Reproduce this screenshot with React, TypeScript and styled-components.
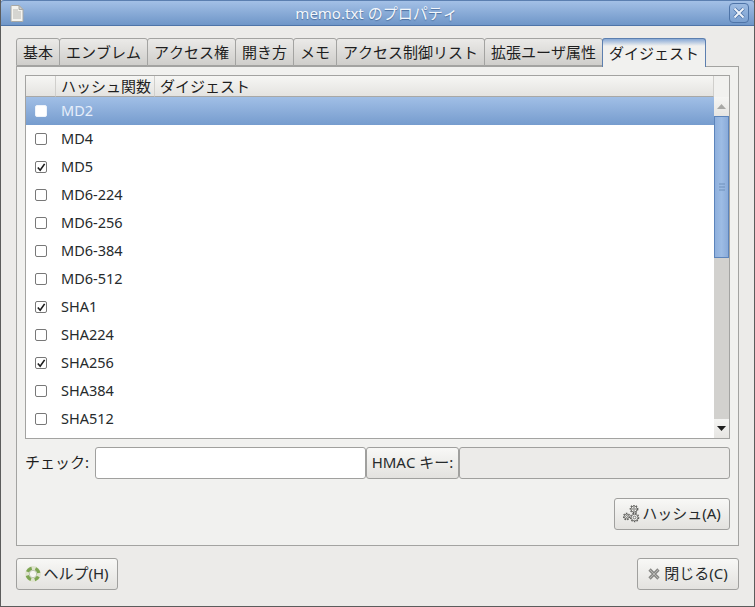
import styled, { createGlobalStyle } from "styled-components";

const Global = createGlobalStyle`
  html, body {
    margin: 0;
    padding: 0;
    background: #ecebe9;
  }
  * {
    box-sizing: border-box;
  }
`;

const Window = styled.div`
  display: flex;
  flex-direction: column;
  width: 755px;
  height: 607px;
  overflow: hidden;
  background: #ecebe9;
  border: 1px solid #5c5c5c;
  border-top: none;
  color: #2e3436;
  font-family: "Noto Sans", "Noto Sans CJK JP", sans-serif;
  font-size: 15px;
  font-kerning: none;
  line-height: 20px;
`;

const TitleBar = styled.div`
  display: flex;
  align-items: center;
  flex-shrink: 0;
  height: 26px;
  margin: 0 -1px;
  padding: 0 5px 0 9px;
  background: linear-gradient(#a3c0e6, #6f96c8);
  border: 1px solid #4e74a8;
  border-top-color: #5b7fb0;
  border-radius: 4px 4px 0 0;
`;

const TitleText = styled.div`
  flex: 1;
  text-align: center;
  color: #f4f7fb;
  text-shadow: 0 1px 1px #4a6f9f;
`;

const CloseBox = styled.div`
  display: flex;
  align-items: center;
  justify-content: center;
  width: 20px;
  height: 20px;
  border: 1px solid #4e74a8;
  border-radius: 4px;
  background: linear-gradient(#9dbbe2, #7ba0d0);
`;

const Body = styled.div`
  flex: 1;
  display: flex;
  flex-direction: column;
  padding: 12px 15px 16px;
  min-height: 0;
`;

const TabStrip = styled.div`
  display: flex;
  flex-shrink: 0;
  height: 29px;
  margin-bottom: -1px;
`;

const Tab = styled.div<{ $active?: boolean }>`
  display: flex;
  align-items: center;
  justify-content: center;
  flex-shrink: 0;
  height: ${({ $active }) => ($active ? "29px" : "28px")};
  padding: 0 6px;
  margin-right: -1px;
  color: #1e1e1e;
  white-space: nowrap;
  border: 1px solid ${({ $active }) => ($active ? "#5c7faf" : "#a3a3a1")};
  border-bottom: ${({ $active }) => ($active ? "none" : "1px solid #a3a3a1")};
  border-radius: 3px 3px 0 0;
  background: ${({ $active }) =>
    $active
      ? "linear-gradient(#88a9d6 0, #f1f1ef 7px, #f1f1ef 100%)"
      : "linear-gradient(#ebeae8, #cfcecb)"};
  position: relative;
  z-index: ${({ $active }) => ($active ? 1 : 0)};
`;

const Panel = styled.div`
  flex: 1;
  display: flex;
  flex-direction: column;
  min-height: 0;
  padding: 8px;
  background: #f1f1ef;
  border: 1px solid #a3a3a1;
`;

const Tree = styled.div`
  display: flex;
  flex-direction: column;
  height: 364px;
  flex-shrink: 0;
  background: #fff;
  border: 1px solid #a3a3a1;
`;

const HeaderRow = styled.div`
  display: flex;
  flex-shrink: 0;
  height: 21px;
  background: #f1f1ef;
`;

const HeaderCell = styled.div<{ $width?: number }>`
  display: flex;
  align-items: center;
  flex: ${({ $width }) => ($width ? `0 0 ${$width}px` : "1")};
  padding-left: 5px;
  color: #1e1e1e;
  background: linear-gradient(#f6f6f4, #e4e3e0);
  border-right: 1px solid #d0cfcc;
  border-bottom: 1px solid #a8a8a6;
`;

const HeaderSpacer = styled.div`
  flex: 0 0 15px;
`;

const TreeBody = styled.div`
  flex: 1;
  display: flex;
  min-height: 0;
`;

const Rows = styled.div`
  flex: 1;
  display: flex;
  flex-direction: column;
`;

const Row = styled.div<{ $selected?: boolean }>`
  display: flex;
  align-items: center;
  flex-shrink: 0;
  height: 28px;
  padding-left: 9px;
  font-size: 14.5px;
  color: ${({ $selected }) => ($selected ? "#e6eefa" : "#262a2c")};
  background: ${({ $selected }) =>
    $selected ? "linear-gradient(#a1bfe6, #769cce)" : "#fff"};
`;

const RowName = styled.span`
  margin-bottom: 2px;
`;

const Check = styled.div<{ $selected?: boolean }>`
  display: flex;
  align-items: center;
  justify-content: center;
  width: 12px;
  height: 12px;
  margin-right: 14px;
  background: #fff;
  border: 1px solid ${({ $selected }) => ($selected ? "#eef3fa" : "#787878")};
  border-radius: 2px;
`;

const Scrollbar = styled.div`
  flex: 0 0 15px;
  display: flex;
  flex-direction: column;
  background: #d2d1ce;
`;

const ScrollButton = styled.div<{ $height: number }>`
  display: flex;
  align-items: center;
  justify-content: center;
  flex: 0 0 ${({ $height }) => $height}px;
  background: linear-gradient(#f5f5f3, #e6e5e2);
`;

const Thumb = styled.div`
  display: flex;
  align-items: center;
  justify-content: center;
  flex: 0 0 142px;
  background: linear-gradient(90deg, #8fb0dd, #9dbce4 50%, #8aabd9);
  border: 1px solid #5c84bb;
`;

const Trough = styled.div`
  flex: 1;
`;

const EntryRow = styled.div`
  display: flex;
  align-items: center;
  flex-shrink: 0;
  height: 32px;
  margin-top: 8px;
`;

const EntryLabel = styled.div`
  flex: 0 0 70px;
  padding-bottom: 2px;
  color: #1e1e1e;
`;

const Entry = styled.div<{ $disabled?: boolean; $width?: number }>`
  height: 32px;
  flex: ${({ $width }) => ($width ? `0 0 ${$width}px` : "1")};
  background: ${({ $disabled }) => ($disabled ? "#ecebe9" : "#fff")};
  border: 1px solid #a0a09e;
  border-radius: 3px;
`;

const Button = styled.div`
  display: inline-flex;
  align-items: center;
  justify-content: center;
  height: 32px;
  padding-bottom: 2px;
  gap: 1px;
  color: #262a2c;
  white-space: nowrap;
  background: linear-gradient(#f8f8f6, #e3e2df);
  border: 1px solid #a0a09e;
  border-radius: 3px;
`;

const ButtonIcon = styled.span`
  display: flex;
  margin-bottom: -2px;
`;

const HmacButton = styled(Button)`
  flex: 0 0 93px;
`;

const ActionRow = styled.div`
  display: flex;
  justify-content: flex-end;
  margin-top: 19px;
`;

const HashButton = styled(Button)`
  width: 116px;
  gap: 2px;
`;

const DialogButtons = styled.div`
  display: flex;
  justify-content: space-between;
  flex-shrink: 0;
  margin-top: 12px;
`;

const HelpButton = styled(Button)`
  width: 102px;
  gap: 2px;
`;

const CloseButton = styled(Button)`
  width: 102px;
  gap: 4px;
`;

const DocIcon = () => (
  <svg width="14" height="17" viewBox="0 0 14 17">
    <path d="M1.5.5h7.5l4 4v11.5a.5.5 0 0 1-.5.5h-11a.5.5 0 0 1-.5-.5v-15a.5.5 0 0 1 .5-.5z" fill="#f4f3ef" stroke="#a8a8a4" />
    <path d="M9 .5v4h4z" fill="#d5d4cf" stroke="#a8a8a4" />
    <path d="M3 5h5M3 7h8M3 9h8M3 11h8M3 13h8" stroke="#b6b6b2" />
  </svg>
);

const CloseGlyph = () => (
  <svg width="14" height="14" viewBox="0 0 14 14">
    <path d="M2.5 2.5l9 9M11.5 2.5l-9 9" stroke="#4e74a8" strokeWidth="3.6" />
    <path d="M2.5 2.5l9 9M11.5 2.5l-9 9" stroke="#eef3fa" strokeWidth="2" />
  </svg>
);

const CheckMark = () => (
  <svg width="11" height="11" viewBox="0 0 11 11">
    <path d="M2 5.5l2.6 3L9.5 1.5" fill="none" stroke="#1c1c1c" strokeWidth="1.8" />
  </svg>
);

const Arrow = ({ up, color }: { up?: boolean; color: string }) => (
  <svg width="9" height="5" viewBox="0 0 9 5">
    <path d={up ? "M4.5 0L9 5H0z" : "M0 0h9L4.5 5z"} fill={color} />
  </svg>
);

const Grip = () => (
  <svg width="6" height="8" viewBox="0 0 6 8">
    <path d="M0 1h6M0 4h6M0 7h6" stroke="#6f8fb9" strokeWidth="1.2" />
  </svg>
);

// life ring: pale band with green blocks on the diagonals
const HelpIcon = () => (
  <svg width="16" height="16" viewBox="0 0 16 16">
    <circle cx="8" cy="8" r="5.8" fill="none" stroke="#dfe3cf" strokeWidth="4.2" />
    <circle
      cx="8"
      cy="8"
      r="5.8"
      fill="none"
      stroke="#7da552"
      strokeWidth="3.4"
      strokeDasharray="5.6 3.5"
      strokeDashoffset="2.8"
      transform="rotate(45 8 8)"
    />
    <circle cx="8" cy="8" r="3.7" fill="#f6f6f3" stroke="#a9b49b" strokeWidth=".7" />
  </svg>
);

const Gear = ({ x, y, r }: { x: number; y: number; r: number }) => (
  <g>
    <circle cx={x} cy={y} r={r + 0.7} fill="none" stroke="#5e5e5b" strokeWidth="1.4" strokeDasharray="1.5 1.2" />
    <circle cx={x} cy={y} r={r} fill="#f2f2f0" stroke="#5e5e5b" strokeWidth=".8" />
    <circle cx={x} cy={y} r={r * 0.42} fill="#f8f8f6" stroke="#5e5e5b" strokeWidth=".8" />
  </g>
);

const GearsIcon = () => (
  <svg width="17" height="18" viewBox="0 0 17 18">
    <Gear x={11} y={4} r={3} />
    <Gear x={3.6} y={11.5} r={2.4} />
    <Gear x={11.6} y={12.5} r={3.3} />
  </svg>
);

const CrossIcon = () => (
  <svg width="12" height="12" viewBox="0 0 12 12">
    <path d="M1.5 1.5l9 9M10.5 1.5l-9 9" stroke="#8a8a87" strokeWidth="3.2" />
    <path d="M2 2l8 8M10 2l-8 8" stroke="#b5b5b2" strokeWidth="1" />
  </svg>
);

const tabs = ["基本", "エンブレム", "アクセス権", "開き方", "メモ", "アクセス制御リスト", "拡張ユーザ属性", "ダイジェスト"];

const hashes = [
  { name: "MD2", checked: false },
  { name: "MD4", checked: false },
  { name: "MD5", checked: true },
  { name: "MD6-224", checked: false },
  { name: "MD6-256", checked: false },
  { name: "MD6-384", checked: false },
  { name: "MD6-512", checked: false },
  { name: "SHA1", checked: true },
  { name: "SHA224", checked: false },
  { name: "SHA256", checked: true },
  { name: "SHA384", checked: false },
  { name: "SHA512", checked: false },
];

export default function App() {
  return (
    <>
      <Global />
      <Window>
        <TitleBar>
          <DocIcon />
          <TitleText>memo.txt のプロパティ</TitleText>
          <CloseBox>
            <CloseGlyph />
          </CloseBox>
        </TitleBar>
        <Body>
          <TabStrip>
            {tabs.map((tab, i) => (
              <Tab key={tab} $active={i === tabs.length - 1}>
                {tab}
              </Tab>
            ))}
          </TabStrip>
          <Panel>
            <Tree>
              <HeaderRow>
                <HeaderCell $width={30} />
                <HeaderCell $width={99}>ハッシュ関数</HeaderCell>
                <HeaderCell>ダイジェスト</HeaderCell>
                <HeaderSpacer />
              </HeaderRow>
              <TreeBody>
                <Rows>
                  {hashes.map((hash, i) => (
                    <Row key={hash.name} $selected={i === 0}>
                      <Check $selected={i === 0}>{hash.checked && <CheckMark />}</Check>
                      <RowName>{hash.name}</RowName>
                    </Row>
                  ))}
                </Rows>
                <Scrollbar>
                  <ScrollButton $height={19}>
                    <Arrow up color="#a8a8a5" />
                  </ScrollButton>
                  <Thumb>
                    <Grip />
                  </Thumb>
                  <Trough />
                  <ScrollButton $height={19}>
                    <Arrow color="#1e1e1e" />
                  </ScrollButton>
                </Scrollbar>
              </TreeBody>
            </Tree>
            <EntryRow>
              <EntryLabel>チェック:</EntryLabel>
              <Entry $width={271} />
              <HmacButton>HMAC キー:</HmacButton>
              <Entry $disabled />
            </EntryRow>
            <ActionRow>
              <HashButton>
                <ButtonIcon>
                  <GearsIcon />
                </ButtonIcon>
                ハッシュ(A)
              </HashButton>
            </ActionRow>
          </Panel>
          <DialogButtons>
            <HelpButton>
              <ButtonIcon>
                <HelpIcon />
              </ButtonIcon>
              ヘルプ(H)
            </HelpButton>
            <CloseButton>
              <ButtonIcon>
                <CrossIcon />
              </ButtonIcon>
              閉じる(C)
            </CloseButton>
          </DialogButtons>
        </Body>
      </Window>
    </>
  );
}
